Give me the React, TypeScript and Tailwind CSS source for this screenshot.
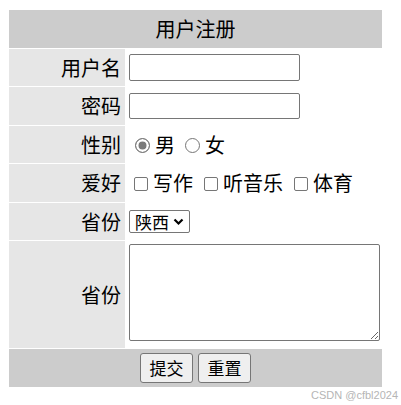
import { useState } from "react";

const font = { fontFamily: '"Microsoft YaHei", "Noto Sans CJK SC", "Noto Sans", sans-serif' };

function Label({ text }: { text: string }) {
  return (
    <div className="flex items-center justify-end bg-[#e6e6e6] pr-[4px] text-[20px] text-black">
      {text}
    </div>
  );
}

export default function App() {
  const [sex, setSex] = useState("男");
  return (
    <div className="min-h-[405px] w-[401px] bg-white" style={font}>
      <div className="ml-[9px] w-[373px] pt-[10px]">
        <div className="flex flex-col gap-y-[1px]">
          <div className="flex h-[38px] items-center justify-center bg-[#cccccc] text-[20px]">用户注册</div>

          <div className="grid h-[37px] grid-cols-[116px_1fr] gap-x-[1px]">
            <Label text="用户名" />
            <div className="flex items-center pl-[3px]">
              <input type="text" className="h-[27px] w-[171px] rounded-[2px] border border-[#767676] bg-white px-1 text-[14px]" />
            </div>
          </div>

          <div className="grid h-[38px] grid-cols-[116px_1fr] gap-x-[1px]">
            <Label text="密码" />
            <div className="flex items-center pl-[3px]">
              <input type="password" className="h-[26px] w-[171px] rounded-[2px] border border-[#767676] bg-white px-1 text-[14px]" />
            </div>
          </div>

          <div className="grid h-[37px] grid-cols-[116px_1fr] gap-x-[1px]">
            <Label text="性别" />
            <div className="flex items-center pl-[3px] text-[20px]">
              {["男", "女"].map((s) => (
                <label key={s} className="mr-[4px] flex items-center">
                  <input
                    type="radio"
                    name="sex"
                    checked={sex === s}
                    onChange={() => setSex(s)}
                    className="mt-[2px] mr-[5px] ml-[6px] block h-[15px] min-h-[15px] w-[15px] min-w-[15px] shrink-0 appearance-none rounded-full border border-[#767676] bg-white checked:bg-[#7a7a7a] checked:shadow-[inset_0_0_0_2.5px_white]"
                  />
                  {s}
                </label>
              ))}
            </div>
          </div>

          <div className="grid h-[38px] grid-cols-[116px_1fr] gap-x-[1px]">
            <Label text="爱好" />
            <div className="flex items-center pl-[3px] text-[20px]">
              {["写作", "听音乐", "体育"].map((h) => (
                <label key={h} className="mr-[6px] flex items-center">
                  <input
                    type="checkbox"
                    className="mt-[2px] mr-[5px] ml-[5px] block h-[14px] min-h-[14px] w-[14px] min-w-[14px] shrink-0 appearance-none rounded-[2px] border border-[#767676] bg-white checked:bg-[#767676]"
                  />
                  {h}
                </label>
              ))}
            </div>
          </div>

          <div className="grid h-[37px] grid-cols-[116px_1fr] gap-x-[1px]">
            <Label text="省份" />
            <div className="flex items-center pl-[3px]">
              <div className="relative mt-[1px]">
                <select className="h-[23px] w-[61px] appearance-none rounded-[2px] border border-[#767676] bg-white pl-[5px] text-[17px] leading-[21px]">
                  <option>陕西</option>
                  <option>北京</option>
                  <option>上海</option>
                </select>
                <svg
                  className="pointer-events-none absolute top-[8px] right-[6px]"
                  width="11"
                  height="8"
                  viewBox="0 0 11 8"
                >
                  <path d="M1.5 1.5 L5.5 5.5 L9.5 1.5" fill="none" stroke="#000" strokeWidth="2.2" />
                </svg>
              </div>
            </div>
          </div>

          <div className="grid h-[107px] grid-cols-[116px_1fr] gap-x-[1px]">
            <Label text="省份" />
            <div className="flex items-start pl-[3px] pt-[3px]">
              <textarea className="h-[97px] w-[251px] rounded-[2px] border border-[#767676] bg-white p-1 text-[14px]" />
            </div>
          </div>

          <div className="flex h-[38px] items-center justify-center gap-[5px] bg-[#cccccc]">
            <button className="h-[30px] w-[53px] rounded-[3px] border border-[#767676] bg-[#efefef] text-[17px] text-black">
              提交
            </button>
            <button className="h-[30px] w-[53px] rounded-[3px] border border-[#767676] bg-[#efefef] text-[17px] text-black">
              重置
            </button>
          </div>
        </div>
      </div>
      <div
        className="pr-[3px] pt-[2px] text-right text-[11px] leading-[13px] text-[#b5b5b5]"
        style={{ fontFamily: '"Liberation Sans", Arial, sans-serif' }}
      >
        CSDN @cfbl2024
      </div>
    </div>
  );
}
